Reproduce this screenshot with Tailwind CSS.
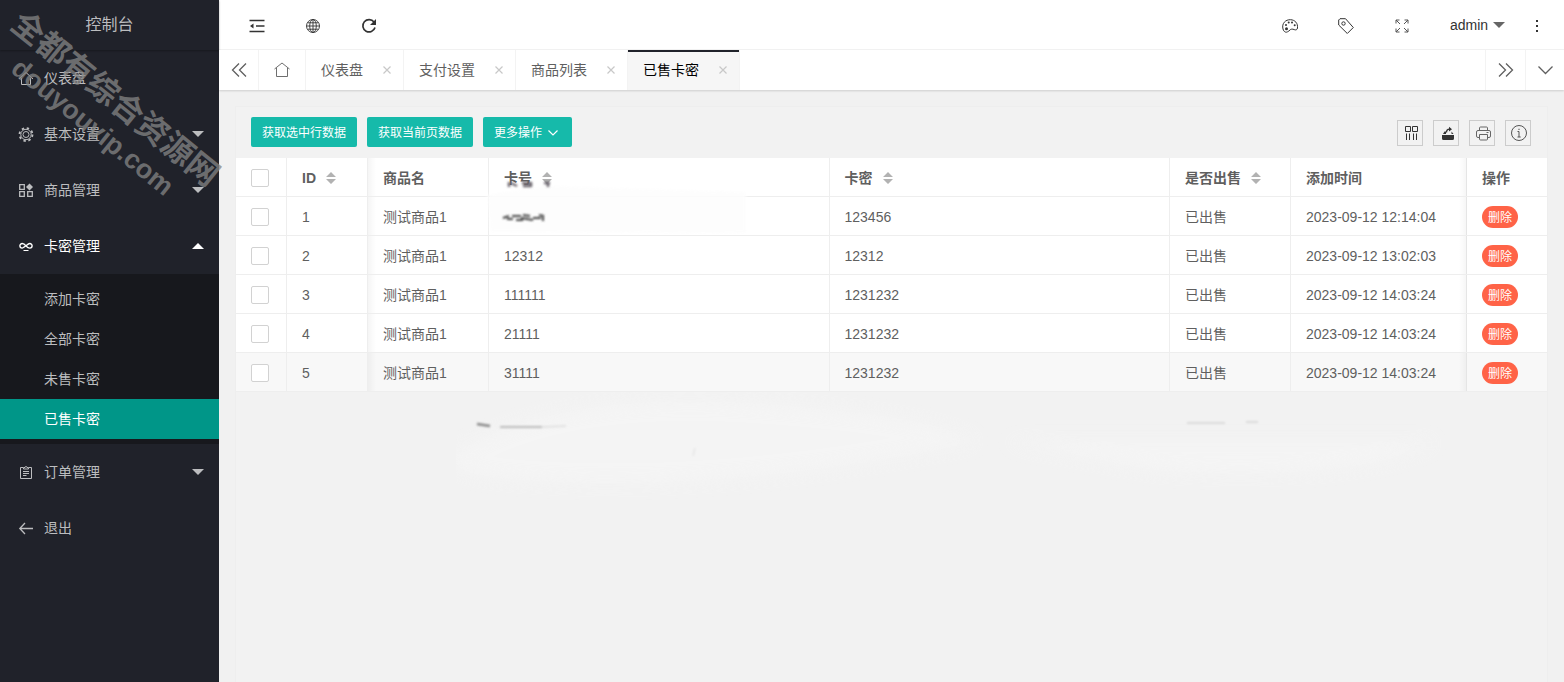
<!DOCTYPE html>
<html lang="zh-CN">
<head>
<meta charset="utf-8">
<meta name="viewport" content="width=device-width, initial-scale=1">
<title>控制台</title>
<script src="https://cdn.jsdelivr.net/npm/@tailwindcss/browser@4"></script>
</head>
<body class="flex min-h-screen overflow-x-hidden bg-[#f1f1f1] font-['Liberation_Sans','Noto_Sans_CJK_SC',sans-serif] text-sm text-[#5f5f5f]">

<svg class="hidden" aria-hidden="true">
  <symbol id="sort" viewBox="0 0 10 12"><path d="M5 0l5 5H0zM5 12l5-5H0z" fill="#b2b2b2"/></symbol>
  <symbol id="close" viewBox="0 0 8 8"><path d="M.5 .5l7 7M7.5 .5l-7 7" stroke="#c8c8c8" stroke-width="1.2"/></symbol>
  <symbol id="down" viewBox="0 0 12 6"><path d="M0 0h12L6 6z" fill="currentColor"/></symbol>
</svg>

<aside class="relative flex w-[219px] shrink-0 flex-col bg-[#20222a] text-[#bcbdbf]">
  <h1 class="flex h-[50px] items-center justify-center text-base shadow-[0_1px_2px_rgba(0,0,0,0.3)]">控制台</h1>
  <nav class="flex flex-col">
    <a href="#" class="flex h-14 items-center gap-[10px] pl-[18px]">
      <svg class="size-4" viewBox="0 0 16 16" fill="none" stroke="currentColor"><path d="M1 9l7-6.500L15 9M3.500 8v6.500h9V8"/></svg>仪表盘</a>
    <a href="#" class="flex h-14 items-center gap-[10px] pr-[15px] pl-[18px]">
      <svg class="size-4" viewBox="0 0 16 16" fill="none" stroke="currentColor"><circle cx="8" cy="8.500" r="3"/><circle cx="8" cy="8.500" r="5.200"/><circle cx="8" cy="8.500" r="6.500" stroke-width="1.800" stroke-dasharray="2.400 2.705"/></svg>
      <span class="grow">基本设置</span><svg class="h-[6px] w-3"><use href="#down"/></svg></a>
    <a href="#" class="flex h-14 items-center gap-[10px] pr-[15px] pl-[18px]">
      <svg class="size-4" viewBox="0 0 16 16" fill="none" stroke="currentColor" stroke-width="1.300"><path d="M1.700 2.700h4.600v4.600H1.700zM1.700 9.700h4.600v4.600H1.700zM9.700 9.700h4.600v4.600H9.700z"/><path d="M11.500 1.500L15 5l-3.500 3.500L8 5z" fill="currentColor" stroke="none"/></svg>
      <span class="grow">商品管理</span><svg class="h-[6px] w-3"><use href="#down"/></svg></a>
    <a href="#" class="flex h-14 items-center gap-[10px] pr-[15px] pl-[18px] text-white">
      <svg class="size-4" viewBox="0 0 16 16" fill="none" stroke="currentColor" stroke-width="1.400"><path d="M8 8C6.500 6 5.500 5.500 4.200 5.500a2.300 2.300 0 000 4.600C6 10.100 10 5.500 11.800 5.500a2.300 2.300 0 010 4.600C10.500 10.100 9.500 9.500 8 8z"/><path d="M5.500 12.500h5" stroke-width="1"/></svg>
      <span class="grow">卡密管理</span><svg class="h-[6px] w-3 rotate-180"><use href="#down"/></svg></a>
    <div class="flex flex-col bg-[#17181d] py-[5px]">
      <a href="#" class="flex h-10 items-center pl-11">添加卡密</a>
      <a href="#" class="flex h-10 items-center pl-11">全部卡密</a>
      <a href="#" class="flex h-10 items-center pl-11">未售卡密</a>
      <a href="#" class="flex h-10 items-center bg-[#009688] pl-11 text-white">已售卡密</a>
    </div>
    <a href="#" class="flex h-14 items-center gap-[10px] pr-[15px] pl-[18px]">
      <svg class="size-4" viewBox="0 0 16 16" fill="none" stroke="currentColor" stroke-width="1"><path d="M5 3.500H2.500v11h11v-11H11M5.500 5V3.500H7a1 1 0 012 0h1.500V5zM5 7.500h6M5 9.500h6M5 11.500h3.500"/></svg>
      <span class="grow">订单管理</span><svg class="h-[6px] w-3"><use href="#down"/></svg></a>
    <a href="#" class="flex h-14 items-center gap-[10px] pl-[18px]">
      <svg class="size-4" viewBox="0 0 16 16" fill="none" stroke="currentColor" stroke-width="1.300"><path d="M15 8.500H2M7 3L1.800 8.500 7 14"/></svg>退出</a>
  </nav>
  <div class="pointer-events-none absolute top-[113px] left-[104px] z-20 -translate-x-1/2 -translate-y-1/2 rotate-[39deg] text-center font-bold whitespace-nowrap text-[#858585]/75">
    <p class="text-[32px] leading-9">全都有综合资源网</p>
    <p class="text-[27px] leading-9">douyouvip.com</p>
  </div>
</aside>

<div class="flex min-w-0 grow flex-col">
  <header class="flex h-[50px] items-center justify-between border-b border-[#f3f3f3] bg-white pt-px pl-[10px] text-[#333]">
    <div class="flex">
      <button aria-label="菜单" class="flex h-12 w-14 items-center justify-center pt-px"><svg class="size-4" viewBox="0 0 16 16" fill="none" stroke="currentColor" stroke-width="1.500"><path d="M.5 2.500h15M7 8h8.500M.5 13.500h15"/><path d="M1 8l3.500-2.500v5z" fill="currentColor" stroke="none"/></svg></button>
      <button aria-label="网站" class="flex h-12 w-14 items-center justify-center pt-px"><svg class="size-4" viewBox="0 0 16 16" fill="none" stroke="currentColor" stroke-width=".9"><circle cx="8" cy="8" r="6.500"/><ellipse cx="8" cy="8" rx="3.300" ry="6.500"/><path d="M8 1.500v13M1.500 8h13M2.700 4.800h10.600M2.700 11.200h10.600"/></svg></button>
      <button aria-label="刷新" class="flex h-12 w-14 items-center justify-center pt-px"><svg class="size-4" viewBox="0 0 16 16" fill="none" stroke="currentColor" stroke-width="1.700"><path d="M13 4A6.200 6.200 0 1014 9.500"/><path d="M15 1v6H9z" fill="currentColor" stroke="none"/></svg></button>
    </div>
    <div class="flex">
      <button aria-label="主题" class="flex h-12 w-14 items-center justify-center pt-px"><svg class="size-4" viewBox="0 0 16 16" fill="none" stroke="currentColor" stroke-width="1"><path d="M5.500 13.800C4 14.800 1.800 14 1 11 -.5 5.500 3.500 1.500 8.500 1.700c4.500.2 7.500 3.500 7 8.300-.2 1.800-1.800 2.300-3.300 1.600-1.700-.8-3.500-.6-4.200.4-.8 1-1.300 1-2.500 1.800z"/><g fill="currentColor" stroke="none"><circle cx="4" cy="7" r="1"/><circle cx="6.700" cy="4.500" r="1"/><circle cx="10" cy="4.500" r="1"/><circle cx="12.700" cy="7.200" r="1"/><circle cx="4.500" cy="10.800" r="1.500"/></g></svg></button>
      <button aria-label="标签" class="flex h-12 w-14 items-center justify-center pt-px"><svg class="size-4" viewBox="0 0 16 16" fill="none" stroke="currentColor" stroke-width="1"><path d="M.7 2v5l8.600 8.500 6-6L7.500.7H2z" stroke-linejoin="round"/><circle cx="5.500" cy="5.500" r="1.700"/></svg></button>
      <button aria-label="全屏" class="flex h-12 w-14 items-center justify-center pt-px"><svg class="size-[14px]" viewBox="0 0 14 14" fill="none" stroke="#555" stroke-width="1"><path d="M1 4.500V1h3.500M1 1l4 4M9.500 1H13v3.500M13 1L9 5M1 9.500V13h3.500M1 13l4-4M13 9.500V13H9.500M13 13L9 9"/></svg></button>
      <button class="flex h-12 w-20 items-center gap-[5px] pl-5">admin<svg class="h-[6px] w-3 shrink-0 text-[#666]"><use href="#down"/></svg></button>
      <button aria-label="更多" class="flex h-12 w-[54px] items-center justify-center pt-px"><svg class="h-4 w-1" viewBox="0 0 4 16" fill="currentColor"><path d="M1 2h2v2H1zM1 7h2v2H1zM1 12h2v2H1z"/></svg></button>
    </div>
  </header>

  <div class="z-10 flex h-10 bg-white shadow-[0_1px_2px_rgba(0,0,0,0.15)]">
    <button aria-label="向左" class="flex w-10 items-center justify-center border-r border-[#f3f3f3]"><svg class="size-4" viewBox="0 0 16 16" fill="none" stroke="currentColor" stroke-width="1.300"><path d="M8 1.500L1.500 8 8 14.500M15 1.500L8.500 8l6.500 6.500"/></svg></button>
    <a href="#" aria-label="首页" class="flex w-[47px] items-center justify-center border-r border-[#f3f3f3]"><svg class="size-4" viewBox="0 0 16 16" fill="none" stroke="currentColor" stroke-width=".9"><path d="M.5 7L8 1l7.500 6M2.500 6v8.500h11V6"/></svg></a>
    <div class="flex items-center gap-5 border-r border-[#f3f3f3] pr-3 pl-[15px]"><a href="#">仪表盘</a><button aria-label="关闭仪表盘"><svg class="size-2"><use href="#close"/></svg></button></div>
    <div class="flex items-center gap-5 border-r border-[#f3f3f3] pr-3 pl-[15px]"><a href="#">支付设置</a><button aria-label="关闭支付设置"><svg class="size-2"><use href="#close"/></svg></button></div>
    <div class="flex items-center gap-5 border-r border-[#f3f3f3] pr-3 pl-[15px]"><a href="#">商品列表</a><button aria-label="关闭商品列表"><svg class="size-2"><use href="#close"/></svg></button></div>
    <div class="relative flex items-center gap-5 border-r border-[#f3f3f3] bg-[#f6f6f6] pr-3 pl-[15px] text-black before:absolute before:inset-x-0 before:top-0 before:h-[2px] before:bg-[#20222a]"><a href="#">已售卡密</a><button aria-label="关闭已售卡密"><svg class="size-2"><use href="#close"/></svg></button></div>
    <button aria-label="向右" class="ml-auto flex w-10 items-center justify-center border-l border-[#f3f3f3]"><svg class="size-4" viewBox="0 0 16 16" fill="none" stroke="currentColor" stroke-width="1.300"><path d="M1 1.500L7.500 8 1 14.500M8 1.500L14.500 8 8 14.500"/></svg></button>
    <button aria-label="标签菜单" class="flex w-[39px] items-center justify-center border-l border-[#f3f3f3]"><svg class="size-4" viewBox="0 0 16 16" fill="none" stroke="currentColor" stroke-width="1.300"><path d="M1.500 4.500l7 7 7-7"/></svg></button>
  </div>

  <main class="relative mx-4 mt-4 grow border border-b-0 border-[#eee] bg-[#f2f2f2]">
    <div class="flex h-[51px] items-start justify-between pr-4 pl-[15px]">
      <div class="flex gap-[10px] pt-[10px] text-xs text-white">
        <button class="h-[30px] rounded-[2px] bg-[#16baaa] px-[11px] pt-[2px]">获取选中行数据</button>
        <button class="h-[30px] rounded-[2px] bg-[#16baaa] px-[11px] pt-[2px]">获取当前页数据</button>
        <button class="flex h-[30px] items-center gap-[6px] rounded-[2px] bg-[#16baaa] pt-[2px] pr-[14px] pl-[11px]">更多操作<svg class="size-[10px]" viewBox="0 0 10 10" fill="none" stroke="currentColor" stroke-width="1.200"><path d="M.5 2.500L5 7 9.500 2.500"/></svg></button>
      </div>
      <div class="flex gap-[10px] pt-[13px] text-[#333]">
        <button aria-label="筛选列" class="flex size-[26px] items-center justify-center border border-[#ccc]"><svg class="ml-[3px] size-[14px]" viewBox="0 0 14 14" fill="none" stroke="currentColor" stroke-width="1"><path d="M.5 .5h5v5h-5zM7.500 .5h5v5h-5zM1.500 7.500V14M4.500 7.500V14M8.500 7.500V14M11.500 7.500V14"/></svg></button>
        <button aria-label="导出" class="flex size-[26px] items-center justify-center border border-[#ccc]"><svg class="ml-[3px] size-[14px]" viewBox="0 0 14 14" fill="currentColor"><path d="M1 9h12v3.500a1.500 1.500 0 01-1.500 1.500h-9A1.500 1.500 0 011 12.500zM2 8l1.500-2.500H5V8h5.500V5.500L12.500 8z"/><path d="M5.500 6.500C5.500 4 6.500 3.200 8.500 3.200" fill="none" stroke="currentColor" stroke-width="1.300"/><path d="M8 .8L11 3.200 8 5.500z"/></svg></button>
        <button aria-label="打印" class="flex size-[26px] items-center justify-center border border-[#ccc]"><svg class="ml-[2px] size-[15px]" viewBox="0 0 15 15" fill="none" stroke="#666" stroke-width="1"><path d="M3.500 4.500V2a1 1 0 011-1h6a1 1 0 011 1v2.500M3.500 11.500H2a1.500 1.500 0 01-1.500-1.500V6A1.500 1.500 0 012 4.500h11A1.500 1.500 0 0114.500 6v4a1.500 1.500 0 01-1.500 1.500h-1.500M3.500 8.500h8V13a1 1 0 01-1 1h-6a1 1 0 01-1-1zM10.500 6.500h2"/></svg></button>
        <button aria-label="提示" class="flex size-[26px] items-center justify-center border border-[#ccc]"><svg class="ml-[2px] size-4" viewBox="0 0 16 16" fill="none" stroke="#555" stroke-width="1"><circle cx="8" cy="8" r="7.500"/><path d="M6.500 6.500H8V12M6.500 12h3.200M7.300 4.300h1.400"/></svg></button>
      </div>
    </div>

    <!-- soft strokes lying on the empty area below the table -->
    <svg class="pointer-events-none absolute top-[285px] left-[220px] h-[110px] w-[1050px]" viewBox="0 0 1050 110" preserveAspectRatio="none" fill="none" aria-hidden="true">
      <defs><filter id="haze" x="-20%" y="-50%" width="140%" height="200%"><feGaussianBlur stdDeviation="8"/></filter><filter id="ink" x="-20%" y="-300%" width="140%" height="700%"><feGaussianBlur stdDeviation="0.8"/></filter></defs>
      <path d="M20 50Q120 0 300 12T520 50Q300 95 120 90T20 50zM550 50H760L980 50Q900 90 700 78z" fill="#f6f6f6" opacity=".7" filter="url(#haze)"/>
      <g filter="url(#ink)"><path d="M21 32l13 2" stroke="#888" stroke-width="2.500"/><path d="M44 35h42" stroke="#aaa" stroke-width="1.500"/><path d="M86 35l24-1" stroke="#ddd" stroke-width="1.500"/><path d="M239 56l-2 8" stroke="#ddd"/><path d="M731 31h38M790 30h12" stroke="#d4d4d4" stroke-width="1.500"/></g>
    </svg>

    <table class="relative w-full table-fixed border-separate border-spacing-0 bg-white text-left [&_td]:h-[39px] [&_td]:border-r [&_td]:border-b [&_td]:border-[#eee] [&_td]:px-[15px] [&_td]:pt-[2px] [&_td]:pb-0 [&_th]:h-[39px] [&_th]:border-r [&_th]:border-b [&_th]:border-[#eee] [&_th]:px-[15px] [&_th]:pt-[2px] [&_th]:pb-0 [&_th]:font-bold [&_tr>*:last-child]:relative [&_tr>*:last-child]:border-r-0 [&_tr>*:last-child]:before:absolute [&_tr>*:last-child]:before:inset-y-0 [&_tr>*:last-child]:before:right-full [&_tr>*:last-child]:before:w-2 [&_tr>*:last-child]:before:bg-linear-to-l [&_tr>*:last-child]:before:from-black/4 [&_tr>*:last-child]:before:to-transparent [&_tr>*:nth-child(3)]:relative [&_tr>*:nth-child(3)]:before:absolute [&_tr>*:nth-child(3)]:before:inset-y-0 [&_tr>*:nth-child(3)]:before:left-0 [&_tr>*:nth-child(3)]:before:w-2 [&_tr>*:nth-child(3)]:before:bg-linear-to-r [&_tr>*:nth-child(3)]:before:from-black/4 [&_tr>*:nth-child(3)]:before:to-transparent">
      <colgroup><col class="w-[51px]"><col class="w-[81px]"><col class="w-[121px]"><col><col><col class="w-[121px]"><col class="w-[176px]"><col class="w-[80px]"></colgroup>
      <thead>
        <tr>
          <th><input type="checkbox" aria-label="全选" class="block size-[18px] appearance-none rounded-[2px] border border-[#d2d2d2] bg-white"></th>
          <th><span class="flex items-center gap-[10px]">ID<svg class="h-3 w-[10px]"><use href="#sort"/></svg></span></th>
          <th>商品名</th>
          <th class="relative"><span class="flex items-center gap-[10px]">卡号<svg class="h-3 w-[10px]"><use href="#sort"/></svg></span>
            <svg class="pointer-events-none absolute top-4 -left-2 z-10 h-[62px] w-[270px]" viewBox="0 0 270 62" fill="none" aria-hidden="true">
              <defs><filter id="soft"><feGaussianBlur stdDeviation="1.500"/></filter><filter id="smear" x="-20%" y="-50%" width="140%" height="200%"><feGaussianBlur stdDeviation="0.9"/></filter></defs>
              <path d="M6 21Q40 14 75 12L265 18V59L10 58z" fill="#fdfdfd" opacity=".9" filter="url(#soft)"/>
              <g filter="url(#smear)" stroke="#6d6770" stroke-width="2.500"><path d="M28 8v5M30 9l6 3M41 9h9M42 12h8M50 8v5M63 9h6M67 9v4"/></g>
              <g filter="url(#smear)" stroke="#444" stroke-width="2"><path d="M22 44l6-2M26 45h6M31 42h9M35 46h7M42 41l7 1M40 44l12 2M52 44h8M58 41l5 1M62 42v5"/></g>
            </svg></th>
          <th><span class="flex items-center gap-[10px]">卡密<svg class="h-3 w-[10px]"><use href="#sort"/></svg></span></th>
          <th><span class="flex items-center gap-[10px]">是否出售<svg class="h-3 w-[10px]"><use href="#sort"/></svg></span></th>
          <th>添加时间</th><th>操作</th>
        </tr>
      </thead>
      <tbody>
        <tr><td><input type="checkbox" aria-label="选择 1" class="block size-[18px] appearance-none rounded-[2px] border border-[#d2d2d2] bg-white"></td><td>1</td><td>测试商品1</td><td></td><td>123456</td><td>已出售</td><td>2023-09-12 12:14:04</td><td><button class="block h-[22px] rounded-full bg-[#ff6347] px-[6px] pt-[2px] text-xs text-white">删除</button></td></tr>
        <tr><td><input type="checkbox" aria-label="选择 2" class="block size-[18px] appearance-none rounded-[2px] border border-[#d2d2d2] bg-white"></td><td>2</td><td>测试商品1</td><td>12312</td><td>12312</td><td>已出售</td><td>2023-09-12 13:02:03</td><td><button class="block h-[22px] rounded-full bg-[#ff6347] px-[6px] pt-[2px] text-xs text-white">删除</button></td></tr>
        <tr><td><input type="checkbox" aria-label="选择 3" class="block size-[18px] appearance-none rounded-[2px] border border-[#d2d2d2] bg-white"></td><td>3</td><td>测试商品1</td><td>111111</td><td>1231232</td><td>已出售</td><td>2023-09-12 14:03:24</td><td><button class="block h-[22px] rounded-full bg-[#ff6347] px-[6px] pt-[2px] text-xs text-white">删除</button></td></tr>
        <tr><td><input type="checkbox" aria-label="选择 4" class="block size-[18px] appearance-none rounded-[2px] border border-[#d2d2d2] bg-white"></td><td>4</td><td>测试商品1</td><td>21111</td><td>1231232</td><td>已出售</td><td>2023-09-12 14:03:24</td><td><button class="block h-[22px] rounded-full bg-[#ff6347] px-[6px] pt-[2px] text-xs text-white">删除</button></td></tr>
        <tr class="bg-[#f8f8f8]"><td><input type="checkbox" aria-label="选择 5" class="block size-[18px] appearance-none rounded-[2px] border border-[#d2d2d2] bg-white"></td><td>5</td><td>测试商品1</td><td>31111</td><td>1231232</td><td>已出售</td><td>2023-09-12 14:03:24</td><td><button class="block h-[22px] rounded-full bg-[#ff6347] px-[6px] pt-[2px] text-xs text-white">删除</button></td></tr>
      </tbody>
    </table>
  </main>
</div>
</body>
</html>
